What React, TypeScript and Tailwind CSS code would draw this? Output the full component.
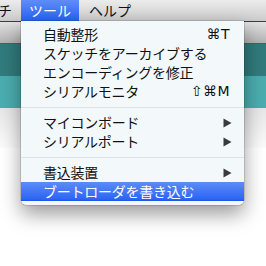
import React from "react";

const jp = "font-['Noto_Sans_CJK_JP','Noto_Sans',sans-serif]";

function Arrow() {
  return (
    <svg width="9" height="10" viewBox="0 0 9 10" className="block">
      <path d="M0.5 0.5 L8.5 5 L0.5 9.5 Z" fill="#3a3a3a" />
    </svg>
  );
}

function Item({
  label,
  shortcut,
  arrow,
  active,
}: {
  label: string;
  shortcut?: string;
  arrow?: boolean;
  active?: boolean;
}) {
  return (
    <div
      className={
        "flex h-[19px] items-center justify-between pl-[22px] " +
        (arrow ? "pr-[12px] " : "pr-[14px] ") +
        (active
          ? "bg-[linear-gradient(#5d8bf7,#2c66f5_90%,#1a53e6)] text-white"
          : "text-[#111]")
      }
    >
      <span className="text-[14px] leading-[19px] tracking-[-0.25px]">{label}</span>
      {shortcut && (
        <span className="font-['DejaVu_Sans',sans-serif] text-[14px] leading-[19px] tracking-[0.5px]">
          {shortcut}
        </span>
      )}
      {arrow && <Arrow />}
    </div>
  );
}

function Sep() {
  return (
    <div className="flex h-[12px] items-center">
      <div className="h-px w-full bg-[#dde2e4]" />
    </div>
  );
}

export default function App() {
  return (
    <div className={"relative h-[266px] w-[266px] overflow-hidden bg-white " + jp}>
      {/* menu bar */}
      <div className="flex h-[21px] items-stretch bg-[linear-gradient(#ececec,#cbcbcb)] text-[14px] leading-[21px] text-[#111]">
        <div className="ml-[-44px] w-[65px] shrink-0">スケッチ</div>
        <div className="bg-[linear-gradient(#5f8df7,#2663f4)] px-[8px] text-white">ツール</div>
        <div className="px-[10px]">ヘルプ</div>
      </div>
      <div className="h-px bg-[#3d3d3d]" />
      {/* window content behind */}
      <div className="h-[21px] bg-[linear-gradient(#e2e2e2,#b2b2b2)]" />
      <div className="h-px bg-[#5a5a5a]" />
      <div className="h-[32px] bg-[#317b7c]" />
      <div className="h-[32px] bg-[#4badaf]" />
      <div className="h-[40px] bg-[linear-gradient(#e6e6e6,#fbfbfb)]" />

      {/* dropdown menu */}
      <div className="absolute left-[21px] top-[21px] w-[223px] rounded-b-[5px] bg-[#f3f9fb] pb-[4px] pt-[4px] shadow-[0_9px_20px_rgba(0,0,0,0.4),0_0_0_0.5px_rgba(0,0,0,0.25)]">
        <Item label="自動整形" shortcut="⌘T" />
        <Item label="スケッチをアーカイブする" />
        <Item label="エンコーディングを修正" />
        <Item label="シリアルモニタ" shortcut="⇧⌘M" />
        <Sep />
        <Item label="マイコンボード" arrow />
        <Item label="シリアルポート" arrow />
        <Sep />
        <Item label="書込装置" arrow />
        <Item label="ブートローダを書き込む" active />
      </div>
    </div>
  );
}
